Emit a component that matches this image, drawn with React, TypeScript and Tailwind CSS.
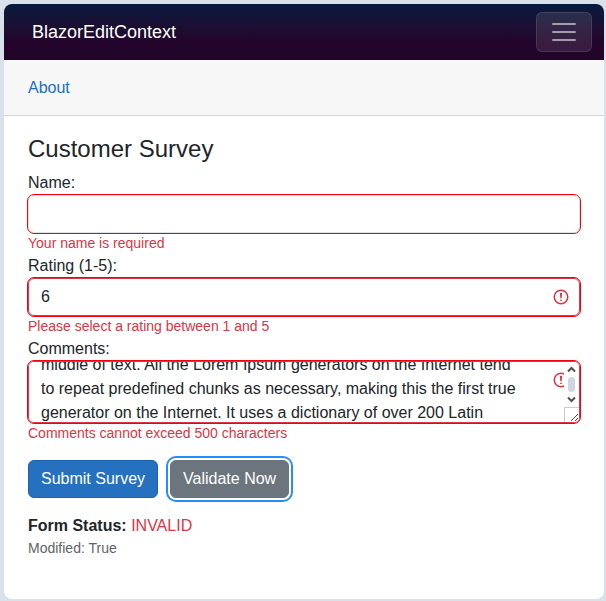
import { useEffect, useRef, useState } from "react";

const initialComments =
  "middle of text. All the Lorem Ipsum generators on the Internet tend to repeat predefined chunks as necessary, making this the first true generator on the Internet. It uses a dictionary of over 200 Latin words, combined with a handful of model sentence structures, to generate Lorem Ipsum which looks reasonable.";

const field =
  "block w-full rounded-md border bg-white text-base leading-6 text-[#212529] outline-1 outline-solid outline-[#f5000f]";

function InvalidIcon({ className }: { className: string }) {
  return (
    <svg className={className} viewBox="0 0 12 12" fill="none" stroke="#dc3545" aria-hidden="true">
      <circle cx="6" cy="6" r="4.5" />
      <path strokeLinejoin="round" d="M5.8 3.6h.4L6 6.5z" />
      <circle cx="6" cy="8.2" r=".6" fill="#dc3545" stroke="none" />
    </svg>
  );
}

function ValidationMessage({ id, text }: { id: string; text: string }) {
  return (
    <div id={id} className="text-sm leading-[21px] text-[#dc3545]">
      {text}
    </div>
  );
}

function ScrollBar() {
  return (
    <div
      className="pointer-events-none absolute inset-y-px right-px flex w-[15px] flex-col items-center rounded-r-[5px] bg-white"
      aria-hidden="true"
    >
      <svg className="h-[15px] w-[15px] shrink-0" viewBox="0 0 15 15" fill="none" stroke="#505050" strokeWidth="2">
        <path d="M4 9.5 7.5 6 11 9.5" />
      </svg>
      <div className="h-[15px] w-[7px] shrink-0 rounded-full bg-[#d0d7e2]" />
      <svg className="h-[15px] w-[15px] shrink-0" viewBox="0 0 15 15" fill="none" stroke="#505050" strokeWidth="2">
        <path d="M4 5.5 7.5 9 11 5.5" />
      </svg>
      <svg
        className="h-[15px] w-[15px] shrink-0 border-l border-t border-[#ccc]"
        viewBox="0 0 14 14"
        fill="none"
        stroke="#505050"
      >
        <path d="M6 13 13 6M10 13l3-3" />
      </svg>
    </div>
  );
}

export default function App() {
  const commentsRef = useRef<HTMLTextAreaElement>(null);
  const [name, setName] = useState("");
  const [rating, setRating] = useState("6");
  const [comments, setComments] = useState(initialComments);

  useEffect(() => {
    if (commentsRef.current) commentsRef.current.scrollTop = 15;
  }, []);

  return (
    <div className="flex min-h-screen bg-[#d9e1ea] pt-1 pr-0.5 pb-0.5 pl-1 font-['Liberation_Sans',Arial,sans-serif] text-base leading-6 text-[#212529]">
      <div className="flex-1 overflow-hidden rounded-lg bg-white">
        <header className="flex h-14 items-center justify-between bg-linear-to-b from-[#051a3e] to-[#23042b] to-70% pr-3 pl-7">
          <a href="#home" className="text-lg text-white">
            BlazorEditContext
          </a>
          <button
            type="button"
            aria-label="Navigation menu"
            className="rounded-md border border-white/10 bg-white/10 px-3 py-1"
          >
            <svg className="h-[30px] w-[30px]" viewBox="0 0 30 30" fill="none" aria-hidden="true">
              <path
                stroke="#ffffff"
                strokeOpacity="0.55"
                strokeLinecap="round"
                strokeWidth="2"
                d="M4 7h22M4 15h22M4 23h22"
              />
            </svg>
          </button>
        </header>
        <nav className="flex h-14 items-center border-b border-[#d6d5d5] bg-[#f7f7f7] px-6">
          <a href="#about" className="text-[#1b6ec2]">
            About
          </a>
        </nav>
        <main className="px-6 pt-[18px] pb-10">
          <h3 className="mb-2 text-2xl leading-[29px]">Customer Survey</h3>
          <form noValidate onSubmit={(e) => e.preventDefault()}>
            <label htmlFor="name" className="block">
              Name:
            </label>
            <input
              id="name"
              value={name}
              onChange={(e) => setName(e.target.value)}
              aria-describedby="name-error"
              className={`${field} h-[38px] border-[#dee2e6] px-3`}
            />
            <ValidationMessage id="name-error" text="Your name is required" />

            <label htmlFor="rating" className="block">
              Rating (1-5):
            </label>
            <div className="relative">
              <input
                id="rating"
                inputMode="numeric"
                value={rating}
                onChange={(e) => setRating(e.target.value)}
                aria-describedby="rating-error"
                className={`${field} h-[38px] border-[#dc3545] pr-9 pl-3`}
              />
              <InvalidIcon className="pointer-events-none absolute top-[10px] right-[10px] h-[18px] w-[18px]" />
            </div>
            <ValidationMessage id="rating-error" text="Please select a rating between 1 and 5" />

            <label htmlFor="comments" className="block">
              Comments:
            </label>
            <div className="relative">
              <textarea
                id="comments"
                ref={commentsRef}
                value={comments}
                onChange={(e) => setComments(e.target.value)}
                aria-describedby="comments-error"
                className={`${field} h-[62px] resize-none border-[#dc3545] py-1.5 pr-[51px] pl-3 [scrollbar-width:none]`}
              />
              <InvalidIcon className="pointer-events-none absolute top-[10px] right-[10px] h-[18px] w-[18px]" />
              <ScrollBar />
            </div>
            <ValidationMessage id="comments-error" text="Comments cannot exceed 500 characters" />

            <div className="mt-4 flex gap-3">
              <button
                type="submit"
                className="rounded-md border border-[#1861ac] bg-[#2670c0] px-3 py-1.5 text-white"
              >
                Submit Survey
              </button>
              <button
                type="button"
                className="rounded-md border border-[#6c757d] bg-[#6c757d] px-3 py-1.5 text-white shadow-[0_0_0_2px_white,0_0_0_4px_#258cfb]"
              >
                Validate Now
              </button>
            </div>
          </form>
          <div className="mt-4">
            <strong>Form Status:</strong> <span className="text-[#dc3545]">INVALID</span>
          </div>
          <div className="text-sm leading-[21px] text-[#5f6368]">Modified: True</div>
        </main>
      </div>
    </div>
  );
}
